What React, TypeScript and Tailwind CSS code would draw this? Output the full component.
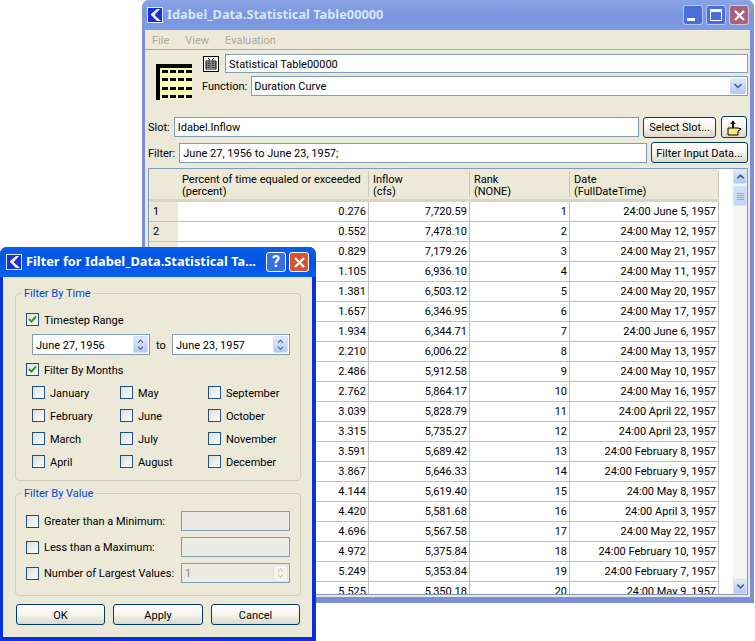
import type { ReactNode } from "react"
import { ChevronDown, ChevronUp } from "lucide-react"

const ROWS = [
  ["0.276", "7,720.59", "24:00 June 5, 1957"],
  ["0.552", "7,478.10", "24:00 May 12, 1957"],
  ["0.829", "7,179.26", "24:00 May 21, 1957"],
  ["1.105", "6,936.10", "24:00 May 11, 1957"],
  ["1.381", "6,503.12", "24:00 May 20, 1957"],
  ["1.657", "6,346.95", "24:00 May 17, 1957"],
  ["1.934", "6,344.71", "24:00 June 6, 1957"],
  ["2.210", "6,006.22", "24:00 May 13, 1957"],
  ["2.486", "5,912.58", "24:00 May 10, 1957"],
  ["2.762", "5,864.17", "24:00 May 16, 1957"],
  ["3.039", "5,828.79", "24:00 April 22, 1957"],
  ["3.315", "5,735.27", "24:00 April 23, 1957"],
  ["3.591", "5,689.42", "24:00 February 8, 1957"],
  ["3.867", "5,646.33", "24:00 February 9, 1957"],
  ["4.144", "5,619.40", "24:00 May 8, 1957"],
  ["4.420", "5,581.68", "24:00 April 3, 1957"],
  ["4.696", "5,567.58", "24:00 May 22, 1957"],
  ["4.972", "5,375.84", "24:00 February 10, 1957"],
  ["5.249", "5,353.84", "24:00 February 7, 1957"],
  ["5.525", "5,350.18", "24:00 May 9, 1957"],
]

const MONTHS = [
  ["January", "May", "September"],
  ["February", "June", "October"],
  ["March", "July", "November"],
  ["April", "August", "December"],
]

const field = "flex items-center border border-[#7f9db9] bg-white px-[3px] pt-px text-[#000]"
const xpButton =
  "flex items-center justify-center rounded-[3px] border border-[#003c74] bg-gradient-to-b from-white via-[#f5f4ee] to-[#dcd8c8] pt-px text-black"

function Logo() {
  return (
    <svg width="16" height="16" viewBox="0 0 16 16" className="shrink-0">
      <rect width="16" height="16" fill="#1a2fd8" />
      <rect x="0.5" y="0.5" width="15" height="15" fill="none" stroke="#dfe7ff" />
      <path d="M13 2 L10 2 L4 7 Q3.5 8 5 9 L10 14 L14 14 L8 8.5 Q7.5 8 8.5 7 Z" fill="#f2f4ff" />
    </svg>
  )
}

function CloseGlyph() {
  return (
    <svg width="13" height="13" viewBox="0 0 13 13">
      <path d="M2 2 L11 11 M11 2 L2 11" stroke="#fff" strokeWidth="2.2" />
    </svg>
  )
}

function CaptionButton({ children, className }: { children: ReactNode; className: string }) {
  return (
    <div className={`flex h-5 w-5 rounded-[3px] border border-white/60 ${className}`}>
      {children}
    </div>
  )
}

function TableIcon() {
  return (
    <svg width="36" height="36" viewBox="0 0 36 36" className="shrink-0">
      <rect width="36" height="36" fill="#ffffb8" />
      <rect width="36" height="4" fill="#000" />
      <rect width="4" height="36" fill="#000" />
      {[6, 14, 23, 31].map((y) =>
        [6, 14, 22, 30].map((x) => <rect key={`${x}-${y}`} x={x} y={y} width="6" height="3" fill="#000" />),
      )}
    </svg>
  )
}

function CheckBox({ checked }: { checked?: boolean }) {
  return (
    <div className="flex h-[13px] w-[13px] shrink-0 items-center justify-center border border-[#1c5180] bg-gradient-to-br from-[#dcdcd7] to-white">
      {checked && (
        <svg width="9" height="9" viewBox="0 0 9 9">
          <path d="M1 4 L3.5 6.5 L8 1.5" fill="none" stroke="#21a121" strokeWidth="2" />
        </svg>
      )}
    </div>
  )
}

function SpinButtons({ disabled }: { disabled?: boolean }) {
  const color = disabled ? "#c9c7ba" : "#4d6185"
  const bg = disabled ? "bg-[#f4f3ee] border-[#e3e1d6]" : "bg-gradient-to-b from-[#e1eafe] to-[#b4c8f6] border-[#d4dff8]"
  return (
    <div className={`-mt-px flex h-[17px] w-[15px] shrink-0 flex-col items-center justify-center rounded-[2px] border ${bg}`}>
      <ChevronUp size={9} color={color} strokeWidth={3} className="-mb-[1px]" />
      <ChevronDown size={9} color={color} strokeWidth={3} className="-mt-[1px]" />
    </div>
  )
}

function HeaderCell({ width, lines }: { width: string; lines: string[] }) {
  return (
    <div className={`${width} my-[2px] flex flex-col justify-center border-r border-[#c9c6b6] pl-[4px] pt-[3px]`}>
      {lines.map((l) => (
        <div key={l}>{l}</div>
      ))}
    </div>
  )
}

function MainWindow() {
  return (
    <div className="absolute left-[142px] top-0 flex h-[603px] w-[612px] flex-col rounded-t-[7px] bg-[#7b8ddb] pb-[6px] pl-[3px] pr-1">
      <div className="-ml-[3px] -mr-1 flex h-[30px] shrink-0 items-center gap-[4px] rounded-t-[7px] bg-gradient-to-b from-[#8aa5e6] via-[#7a96df] to-[#7e9ae2] pl-[5px] pr-[5px]">
        <Logo />
        <span className="flex-1 font-['Noto_Sans',sans-serif] text-[12.8px] font-bold text-[#dbe4f8]">Idabel_Data.Statistical Table00000</span>
        <div className="flex gap-[3px]">
          <CaptionButton className="items-end justify-start bg-[#4a6fd8] pb-[3px] pl-[3px]">
            <div className="h-[3px] w-[8px] bg-white" />
          </CaptionButton>
          <CaptionButton className="items-center justify-center bg-[#4a6fd8]">
            <div className="h-[12px] w-[12px] border border-t-[3px] border-white" />
          </CaptionButton>
          <CaptionButton className="items-center justify-center bg-[#a5667d]">
            <CloseGlyph />
          </CaptionButton>
        </div>
      </div>
      <div className="flex min-h-0 flex-1 flex-col bg-[#ece9d8] text-[11px] leading-none">
        <div className="flex h-5 shrink-0 items-center gap-[16px] border-b border-[#aca899] pl-[7px] pt-px text-[#aca899]">
          <span>File</span>
          <span>View</span>
          <span>Evaluation</span>
        </div>
        <div className="flex shrink-0 pl-[11px] pr-[2px]">
          <div className="pt-[14px]">
            <TableIcon />
          </div>
          <div className="ml-[11px] flex flex-1 flex-col pt-[4px]">
            <div className="flex items-center gap-[6px]">
              <div className="flex h-[16px] w-[16px] items-center justify-center border border-black bg-white">
                <svg width="12" height="12" viewBox="0 0 12 12">
                  <path d="M3 0 L5 2 M9 0 L7 2" stroke="#000" />
                  <path d="M1 3h10v8H1z" fill="#fff" stroke="#000" />
                  <path d="M1 5h10M1 7h10M1 9h10" stroke="#000" />
                  <path d="M4 3v8M8 3v8" stroke="#000" strokeDasharray="1 1" />
                </svg>
              </div>
              <div className={`${field} h-[19px] flex-1`}>Statistical Table00000</div>
            </div>
            <div className="mt-[3px] flex items-center gap-[4px]">
              <span className="-ml-px pt-px">Function:</span>
              <div className={`${field} h-[20px] flex-1 justify-between pl-[2px] pr-[1px]`}>
                <span>Duration Curve</span>
                <div className="-mt-px flex h-[16px] w-[16px] items-center justify-center rounded-[2px] bg-gradient-to-b from-[#e1eafe] to-[#b4c8f6]">
                  <ChevronDown size={12} color="#4d6185" strokeWidth={3.5} />
                </div>
              </div>
            </div>
          </div>
        </div>
        <div className="mt-[16px] flex shrink-0 items-center gap-[4px] pl-[3px] pr-[3px]">
          <span className="pt-px">Slot:</span>
          <div className={`${field} h-[20px] flex-1`}>Idabel.Inflow</div>
          <div className={`${xpButton} h-[21px] w-[73px]`}>Select Slot...</div>
          <div className={`${xpButton} ml-[1px] h-[22px] w-[26px]`}>
            <svg width="16" height="16" viewBox="0 0 16 16">
              <path d="M7 1v7" stroke="#000" strokeWidth="2" />
              <path d="M4 4h6L7 1z" fill="#000" />
              <path d="M2 15V8h10l3 1-3 2v4z" fill="#ffe97f" stroke="#000" />
            </svg>
          </div>
        </div>
        <div className="mt-[4px] flex shrink-0 items-center gap-[4px] pl-[3px] pr-[2px]">
          <span className="pt-px">Filter:</span>
          <div className={`${field} h-[20px] flex-1`}>June 27, 1956 to June 23, 1957;</div>
          <div className={`${xpButton} h-[21px] w-[97px]`}>Filter Input Data...</div>
        </div>
        <div className="mb-[2px] ml-[3px] mr-[2px] mt-[5px] flex min-h-0 flex-1 overflow-hidden border border-[#7f9db9] bg-white">
          <div className="min-w-0 flex-1 overflow-hidden">
            <div className="flex h-[33px] w-fit border-b-[3px] border-[#d8d4c4] bg-[#ece9d8] leading-[12px]">
              <div className="w-[29px] shrink-0" />
              <HeaderCell width="w-[191px]" lines={["Percent of time equaled or exceeded", "(percent)"]} />
              <HeaderCell width="w-[101px]" lines={["Inflow", "(cfs)"]} />
              <HeaderCell width="w-[100px]" lines={["Rank", "(NONE)"]} />
              <HeaderCell width="w-[149px]" lines={["Date", "(FullDateTime)"]} />
            </div>
            {ROWS.map((row, i) => (
              <div key={i} className="flex h-5">
                <div className="flex w-[29px] shrink-0 items-center border-b border-[#c0c0c0] bg-[#ece9d8] pl-[4px]">{i + 1}</div>
                <div className="flex w-[191px] items-center justify-end border-b border-r border-[#c0c0c0] pr-[2px]">{row[0]}</div>
                <div className="flex w-[101px] items-center justify-end border-b border-r border-[#c0c0c0] pr-[2px]">{row[1]}</div>
                <div className="flex w-[100px] items-center justify-end border-b border-r border-[#c0c0c0] pr-[2px]">{i + 1}</div>
                <div className="flex w-[149px] items-center justify-end border-b border-r border-[#c0c0c0] pr-[2px]">{row[2]}</div>
              </div>
            ))}
          </div>
          <div className="flex w-[14px] shrink-0 flex-col bg-[#f6f5ef]">
            <div className="flex h-[15px] items-center justify-center rounded-[2px] border border-[#d4dff8] bg-gradient-to-b from-[#e1eafe] to-[#b4c8f6]">
              <ChevronUp size={11} color="#4d6185" strokeWidth={3.5} />
            </div>
            <div className="mt-[2px] flex h-[20px] flex-col items-center justify-center gap-[1px] rounded-[2px] border border-[#d4dff8] bg-gradient-to-b from-[#d5e1fc] to-[#c2d3fa]">
              <div className="h-px w-[7px] bg-[#8aa5e6]" />
              <div className="h-px w-[7px] bg-[#8aa5e6]" />
              <div className="h-px w-[7px] bg-[#8aa5e6]" />
              <div className="h-px w-[7px] bg-[#8aa5e6]" />
            </div>
            <div className="flex-1" />
            <div className="flex h-[15px] items-center justify-center rounded-[2px] border border-[#d4dff8] bg-gradient-to-b from-[#e1eafe] to-[#b4c8f6]">
              <ChevronDown size={11} color="#4d6185" strokeWidth={3.5} />
            </div>
          </div>
        </div>
      </div>
    </div>
  )
}

function GroupBox({ title, className, children }: { title: string; className: string; children: ReactNode }) {
  return (
    <div className={`relative ml-[12px] mr-[11px] rounded-[4px] border border-[#d0d0bf] ${className}`}>
      <span className="absolute -top-[6px] left-[6px] bg-[#ece9d8] px-[2px] text-[#0046d5]">{title}</span>
      {children}
    </div>
  )
}

function DateSpin({ value }: { value: string }) {
  return (
    <div className={`${field} h-[21px] w-[118px] justify-between pr-[1px]`}>
      <span>{value}</span>
      <SpinButtons />
    </div>
  )
}

function ValueRow({ label, spin }: { label: string; spin?: boolean }) {
  return (
    <div className="flex h-[20px] items-center gap-[5px]">
      <CheckBox />
      <span className="w-[132px] pt-px">{label}</span>
      <div className="flex h-[20px] w-[109px] items-center justify-between border border-[#7f9db9] bg-[#ebebe4] px-[3px] pr-[1px] pt-px text-[#8a8a80]">
        <span>{spin ? "1" : ""}</span>
        {spin && <SpinButtons disabled />}
      </div>
    </div>
  )
}

function FilterDialog() {
  return (
    <div className="absolute left-0 top-[247px] flex h-[394px] w-[316px] flex-col rounded-t-[7px] bg-[#0831d9] pb-1 pl-[3px] pr-1">
      <div className="-ml-[3px] -mr-1 flex h-[30px] shrink-0 items-center gap-[4px] rounded-t-[7px] bg-gradient-to-b from-[#0a5ee8] via-[#0054e3] to-[#0a60f0] pl-[6px] pr-[7px]">
        <Logo />
        <span className="flex-1 truncate font-['Noto_Sans',sans-serif] text-[12.8px] font-bold text-white">Filter for Idabel_Data.Statistical Ta...</span>
        <div className="flex gap-[3px]">
          <div className="flex h-5 w-5 items-center justify-center rounded-[3px] border border-white bg-[#3a6ee6] text-[16px] font-bold text-white">?</div>
          <div className="flex h-5 w-5 items-center justify-center rounded-[3px] border border-white bg-[#d9532e]">
            <CloseGlyph />
          </div>
        </div>
      </div>
      <div className="flex min-h-0 flex-1 flex-col bg-[#ece9d8] pt-[16px] text-[11px] leading-none text-black">
        <GroupBox title="Filter By Time" className="h-[188px] pl-[10px] pt-[19px]">
          <div className="flex items-center gap-[5px]">
            <CheckBox checked />
            <span className="pt-px">Timestep Range</span>
          </div>
          <div className="ml-[6px] mt-[8px] flex items-center">
            <DateSpin value="June 27, 1956" />
            <span className="w-[22px] pt-px text-center">to</span>
            <DateSpin value="June 23, 1957" />
          </div>
          <div className="mt-[8px] flex items-center gap-[5px]">
            <CheckBox checked />
            <span className="pt-px">Filter By Months</span>
          </div>
          <div className="ml-[6px] mt-[10px] grid grid-cols-[88px_88px_88px] gap-y-[10px]">
            {MONTHS.flat().map((m) => (
              <div key={m} className="flex items-center gap-[5px]">
                <CheckBox />
                <span className="pt-px">{m}</span>
              </div>
            ))}
          </div>
        </GroupBox>
        <GroupBox title="Filter By Value" className="mt-[12px] flex h-[103px] flex-col gap-[6px] pl-[10px] pt-[17px]">
          <ValueRow label="Greater than a Minimum:" />
          <ValueRow label="Less than a Maximum:" />
          <ValueRow label="Number of Largest Values:" spin />
        </GroupBox>
        <div className="ml-[13px] mt-[8px] flex gap-[8px]">
          <div className={`${xpButton} h-[21px] w-[89px]`}>OK</div>
          <div className={`${xpButton} h-[21px] w-[90px]`}>Apply</div>
          <div className={`${xpButton} h-[21px] w-[89px]`}>Cancel</div>
        </div>
      </div>
    </div>
  )
}

export default function App() {
  return (
    <div className="relative h-[641px] w-[755px] overflow-hidden bg-white font-['Roboto',sans-serif]">
      <MainWindow />
      <FilterDialog />
    </div>
  )
}
